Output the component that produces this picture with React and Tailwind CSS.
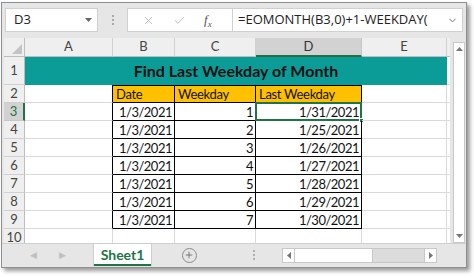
import { Check, X, ChevronDown, Plus } from "lucide-react"

const font = { fontFamily: "Lato, 'Liberation Sans', sans-serif" }

const rows = [
  ["1/3/2021", "1", "1/31/2021"],
  ["1/3/2021", "2", "1/25/2021"],
  ["1/3/2021", "3", "1/26/2021"],
  ["1/3/2021", "4", "1/27/2021"],
  ["1/3/2021", "5", "1/28/2021"],
  ["1/3/2021", "6", "1/29/2021"],
  ["1/3/2021", "7", "1/30/2021"],
]

const cols = ["A", "B", "C", "D", "E", ""]

function RowHead({ n, active }) {
  return (
    <div
      className={
        "flex items-center justify-center text-[13px] border-b border-r " +
        (active
          ? "bg-[#d2d2d2] text-[#217346] border-b-[#c6c6c6] border-r-[#217346] border-r-2"
          : "bg-[#efefef] text-[#444] border-b-[#d0d0d0] border-r-[#bdbdbd]")
      }
    >
      {n}
    </div>
  )
}

function Cell({ children, className = "" }) {
  return <div className={"relative border-r border-b px-[3px] flex items-end text-[13px] tracking-[-0.3px] leading-[16px] text-[#111] " + className}>{children}</div>
}

// numbers are set a little tighter than labels
const num = "justify-end text-[12.5px] tracking-[-0.5px] pr-[2px]"

export default function App() {
  return (
    <div className="w-[474px] h-[278px] bg-white pl-[1px] pt-[2px]" style={font}>
      <div className="w-[466px] h-[266px] border border-[#8f8f8f] bg-[#e6e6e6] shadow-[3px_3px_4px_rgba(0,0,0,0.4)] flex flex-col">
        {/* formula bar */}
        <div className="flex items-center h-[24px] mt-[5px] pl-[3px] pr-[3px]">
          <div className="w-[93px] h-full bg-white border border-[#d0d0d0] flex items-center justify-between pl-[8px] pr-[5px] text-[13px] text-[#222]" style={{ fontFamily: "'Open Sans', sans-serif" }}>
            D3
            <svg width="7" height="4" viewBox="0 0 7 4"><path d="M0 0h7L3.5 4z" fill="#666" /></svg>
          </div>
          <div className="w-[29px] flex justify-center">
            <div className="flex flex-col gap-[2px]">
              <span className="w-[2px] h-[2px] bg-[#aaa]" />
              <span className="w-[2px] h-[2px] bg-[#aaa]" />
              <span className="w-[2px] h-[2px] bg-[#aaa]" />
            </div>
          </div>
          <div className="w-[105px] h-full bg-white border border-[#d0d0d0] border-r-0 flex items-center pl-[14px] gap-[18px] text-[#b5b5b5]">
            <X size={13} strokeWidth={1.6} />
            <Check size={13} strokeWidth={1.6} />
            <span className="text-[13px] italic text-[#555]" style={{ fontFamily: "'Liberation Serif', serif" }}>f<sub className="text-[9px]">x</sub></span>
          </div>
          <div className="flex-1 h-full bg-white border border-[#d0d0d0] flex items-center justify-between pl-[5px] pr-[4px] text-[13px] text-[#222]" style={{ fontFamily: "'Open Sans', sans-serif" }}>
            =EOMONTH(B3,0)+1-WEEKDAY(
            <ChevronDown size={11} className="text-[#666]" />
          </div>
        </div>

        {/* sheet area */}
        <div className="flex mt-[6px] h-[205px] pl-[2px]">
          <div className="w-[447px] overflow-hidden bg-white">
            <div className="grid grid-cols-[21px_88px_62px_81px_106px_85px_10px] grid-rows-[19px_28px_repeat(9,18px)]">
              {/* column headers */}
              <div className="bg-[#efefef] border-r border-b border-[#bdbdbd] flex items-end justify-end p-[2px]">
                <svg width="10" height="10" viewBox="0 0 10 10"><path d="M10 0v10H0z" fill="#c4c4c4" /></svg>
              </div>
              {cols.map((c) => (
                <div
                  key={c || "f"}
                  className={
                    "flex items-center justify-center text-[13px] border-r " +
                    (c === "D"
                      ? "bg-[#d2d2d2] text-[#333] border-r-[#c6c6c6] border-b-2 border-b-[#217346]"
                      : "bg-[#efefef] text-[#444] border-r-[#d0d0d0] border-b border-b-[#bdbdbd]")
                  }
                >
                  {c}
                </div>
              ))}

              {/* title row */}
              <RowHead n={1} />
              <div className="col-span-5 bg-[#0c9c98] flex items-center justify-center text-[16px] font-bold text-[#111]">
                Find Last Weekday of Month
              </div>
              <div className="border-b border-[#dadada]" />

              {/* header row */}
              <RowHead n={2} />
              <Cell className="border-r-black border-b-[#dadada]" />
              <Cell className="bg-[#ffc000] border-black shadow-[inset_0_1px_0_#000]">Date</Cell>
              <Cell className="bg-[#ffc000] border-black shadow-[inset_0_1px_0_#000]">Weekday</Cell>
              <Cell className="bg-[#ffc000] border-black shadow-[inset_0_1px_0_#000]">Last Weekday</Cell>
              <Cell className="border-[#dadada]" />
              <Cell className="border-[#dadada]" />

              {rows.map((r, i) => (
                <div key={i} className="contents">
                  <RowHead n={i + 3} active={i === 0} />
                  <Cell className="border-r-black border-b-[#dadada]" />
                  <Cell className={"border-black " + num}>{r[0]}</Cell>
                  <Cell className={"border-black " + num}>{r[1]}</Cell>
                  <Cell className={"border-black " + num}>
                    {r[2]}
                    {i === 0 && (
                      <>
                        <div className="absolute -left-[1px] -top-[1px] -right-[1px] -bottom-[1px] border-2 border-[#217346]" />
                        <div className="absolute -right-[3px] -bottom-[3px] w-[5px] h-[5px] bg-[#217346] border border-white" />
                      </>
                    )}
                  </Cell>
                  <Cell className="border-[#dadada]" />
                  <Cell className="border-[#dadada]" />
                </div>
              ))}

              <RowHead n={10} />
              <Cell className="border-[#dadada]" />
              <Cell className="border-[#dadada]" />
              <Cell className="border-[#dadada]" />
              <Cell className="border-[#dadada]" />
              <Cell className="border-[#dadada]" />
              <Cell className="border-[#dadada]" />
            </div>
          </div>
          {/* vertical scrollbar */}
          <div className="w-[16px] pl-[3px] pt-[4px] bg-[#e6e6e6] flex flex-col">
            <div className="w-[12px] flex-1 bg-white border border-[#c8c8c8] flex flex-col justify-between items-center py-[4px]">
              <svg width="7" height="4" viewBox="0 0 7 4"><path d="M0 4h7L3.5 0z" fill="#777" /></svg>
              <svg width="7" height="4" viewBox="0 0 7 4"><path d="M0 0h7L3.5 4z" fill="#777" /></svg>
            </div>
          </div>
        </div>

        {/* sheet tabs */}
        <div className="flex items-center h-[23px] border-t border-[#cfcfcf] bg-[#e6e6e6]">
          <div className="w-[91px] flex justify-center gap-[22px] text-[#c0c0c0] text-[9px]">
            <span>◀</span>
            <span>▶</span>
          </div>
          <div className="w-[59px] h-[22px] -mt-[1px] bg-white border-x border-[#cfcfcf] flex flex-col items-center justify-end">
            <span className="text-[14px] font-bold text-[#217346] leading-[18px]">Sheet1</span>
            <div className="w-full h-[2px] bg-[#217346]" />
          </div>
          <div className="w-[74px] flex justify-center">
            <div className="w-[15px] h-[15px] rounded-full border border-[#8a8a8a] flex items-center justify-center text-[#666]">
              <Plus size={10} strokeWidth={2} />
            </div>
          </div>
          <div className="w-[56px] flex justify-center">
            <div className="flex flex-col gap-[2px]">
              <span className="w-[2px] h-[2px] bg-[#b0b0b0]" />
              <span className="w-[2px] h-[2px] bg-[#b0b0b0]" />
              <span className="w-[2px] h-[2px] bg-[#b0b0b0]" />
            </div>
          </div>
          <div className="w-[155px] h-[15px] bg-[#dcdcdc] border border-[#c8c8c8] flex items-center justify-between">
            <div className="flex items-center h-full">
              <div className="w-[12px] h-full bg-white border-r border-[#c8c8c8] flex items-center justify-center">
                <svg width="4" height="7" viewBox="0 0 4 7"><path d="M4 0v7L0 3.5z" fill="#777" /></svg>
              </div>
              <div className="w-[78px] h-full bg-white border-r border-[#c8c8c8]" />
            </div>
            <div className="w-[12px] h-full bg-white border-l border-[#c8c8c8] flex items-center justify-center">
              <svg width="4" height="7" viewBox="0 0 4 7"><path d="M0 0v7l4-3.5z" fill="#777" /></svg>
            </div>
          </div>
        </div>
      </div>
    </div>
  )
}
